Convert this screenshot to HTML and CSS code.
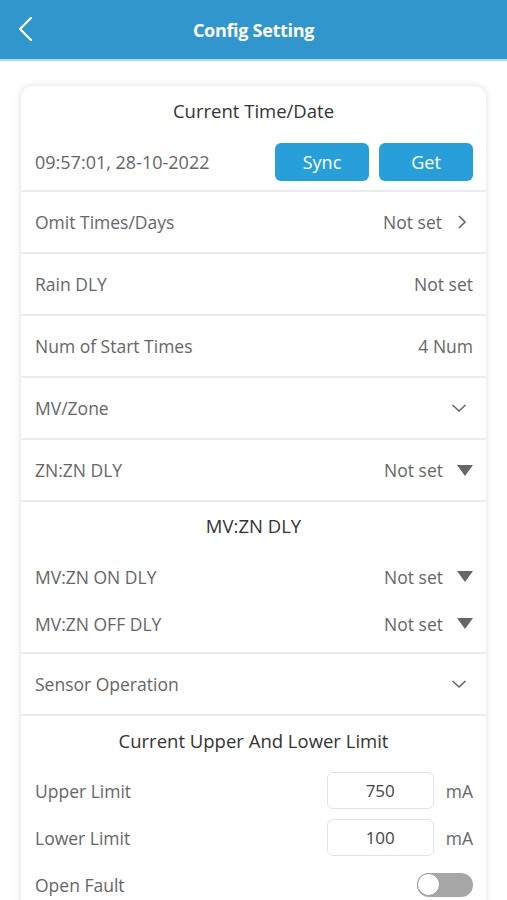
FILE: index.html
```html
<!DOCTYPE html>
<html lang="en">
<head>
  <meta charset="UTF-8" />
  <meta name="viewport" content="width=device-width, initial-scale=1.0"/>
  <title>Config Setting</title>
  <link rel="stylesheet" href="styles.css">
</head>
<body>

<header class="topbar">
  <button class="back-btn" aria-label="Back">
    <svg width="16" height="26" viewBox="0 0 16 26"><path d="M14 2 L3 13 L14 24" fill="none" stroke="#fff" stroke-width="2.2" stroke-linecap="round" stroke-linejoin="round"/></svg>
  </button>
  <h1>Config Setting</h1>
</header>

<main class="page">
  <div class="card">

    <!-- Time / date -->
    <section class="group">
      <h2 class="group-title">Current Time/Date</h2>
      <div class="time-row">
        <span class="label time">09:57:01, 28-10-2022</span>
        <div class="btns">
          <button class="blue-btn">Sync</button>
          <button class="blue-btn">Get</button>
        </div>
      </div>
    </section>

    <div class="row">
      <span class="label">Omit Times/Days</span>
      <span class="value">Not set
        <svg class="chev" width="12" height="16" viewBox="0 0 12 16"><path d="M3 2 L9 8 L3 14" fill="none" stroke="#666" stroke-width="1.6"/></svg>
      </span>
    </div>

    <div class="row">
      <span class="label">Rain DLY</span>
      <span class="value">Not set</span>
    </div>

    <div class="row">
      <span class="label">Num of Start Times</span>
      <span class="value">4 Num</span>
    </div>

    <div class="row">
      <span class="label">MV/Zone</span>
      <span class="value">
        <svg class="down" width="16" height="10" viewBox="0 0 16 10"><path d="M1.5 2 L8 8 L14.5 2" fill="none" stroke="#666" stroke-width="1.6"/></svg>
      </span>
    </div>

    <div class="row">
      <span class="label">ZN:ZN DLY</span>
      <span class="value">Not set <span class="tri"></span></span>
    </div>

    <section class="group delays">
      <h2 class="group-title">MV:ZN DLY</h2>
      <div class="sub-row">
        <span class="label">MV:ZN ON DLY</span>
        <span class="value">Not set <span class="tri"></span></span>
      </div>
      <div class="sub-row">
        <span class="label">MV:ZN OFF DLY</span>
        <span class="value">Not set <span class="tri"></span></span>
      </div>
    </section>

    <div class="row">
      <span class="label">Sensor Operation</span>
      <span class="value">
        <svg class="down" width="16" height="10" viewBox="0 0 16 10"><path d="M1.5 2 L8 8 L14.5 2" fill="none" stroke="#666" stroke-width="1.6"/></svg>
      </span>
    </div>

    <section class="group limits">
      <h2 class="group-title">Current Upper And Lower Limit</h2>
      <div class="sub-row">
        <span class="label">Upper Limit</span>
        <span class="value"><input class="num-box" type="text" value="750"> mA</span>
      </div>
      <div class="sub-row">
        <span class="label">Lower Limit</span>
        <span class="value"><input class="num-box" type="text" value="100"> mA</span>
      </div>
      <div class="sub-row">
        <span class="label">Open Fault</span>
        <span class="toggle"><span class="knob"></span></span>
      </div>
    </section>

  </div>
</main>

</body>
</html>
```

FILE: styles.css
```css
* {
  box-sizing: border-box;
  margin: 0;
  padding: 0;
}

body {
  font-family: 'Open Sans', 'Noto Sans', sans-serif;
  background: #ffffff;
  color: #666;
  overflow: hidden;
}

.topbar {
  height: 61px;
  background: #3196cc;
  border-bottom: 2px solid #a9dcf3;
  display: flex;
  align-items: center;
  justify-content: center;
  position: relative;
}

.topbar h1 {
  color: #fff;
  font-size: 18px;
  font-weight: 700;
  letter-spacing: -0.3px;
}

.back-btn {
  position: absolute;
  left: 17px;
  top: 16px;
  background: none;
  border: none;
}

.page {
  padding: 24px 20px 0 20px;
}

.card {
  background: #fff;
  border-radius: 12px;
  box-shadow: 0 0 6px rgba(0, 0, 0, 0.10);
  border: 1px solid #f0f0f0;
}

.group,
.row {
  border-bottom: 2px solid #ececec;
}

.group-title {
  font-size: 18.5px;
  font-weight: 400;
  color: #333;
  text-align: center;
  padding-top: 12px;
  height: 48px;
  line-height: 26px;
}

.label {
  font-size: 17.5px;
  color: #666;
  white-space: nowrap;
}

.label.time {
  font-size: 18px;
}

.value {
  font-size: 17.5px;
  color: #666;
  display: flex;
  align-items: center;
  gap: 10px;
}

.time-row {
  display: flex;
  justify-content: space-between;
  align-items: center;
  padding: 0 13px 0 14px;
  height: 56px;
}

.btns {
  display: flex;
  gap: 10px;
}

.blue-btn {
  width: 94px;
  height: 38px;
  background: #289fd9;
  color: #fff;
  border: none;
  border-radius: 6px;
  font-family: inherit;
  font-size: 18px;
}

.row {
  display: flex;
  justify-content: space-between;
  align-items: center;
  height: 62px;
  padding: 0 13px 0 14px;
}

.chev {
  margin-left: 4px;
  margin-right: 5px;
}

.down {
  margin-right: 6px;
}

.tri {
  width: 0;
  height: 0;
  border-left: 8px solid transparent;
  border-right: 8px solid transparent;
  border-top: 11px solid #666;
  margin-left: 4px;
}

.sub-row {
  display: flex;
  justify-content: space-between;
  align-items: center;
  height: 47px;
  padding: 0 13px 0 14px;
}

.delays .group-title {
  height: 51px;
  padding-top: 11px;
}

.delays {
  padding-bottom: 5px;
}

.limits {
  border-bottom: none;
  padding-bottom: 8px;
}

.limits .group-title {
  height: 51px;
}

.num-box {
  width: 107px;
  height: 37px;
  border: 1px solid #e4e4e4;
  border-radius: 6px;
  text-align: center;
  font-family: inherit;
  font-size: 17px;
  color: #444;
  margin-right: 2px;
}

.toggle {
  width: 56px;
  height: 24px;
  background: #a6a6a6;
  border-radius: 12px;
  display: flex;
  align-items: center;
}

.knob {
  width: 23px;
  height: 23px;
  border-radius: 50%;
  background: #fff;
  border: 1px solid #999;
}
```
